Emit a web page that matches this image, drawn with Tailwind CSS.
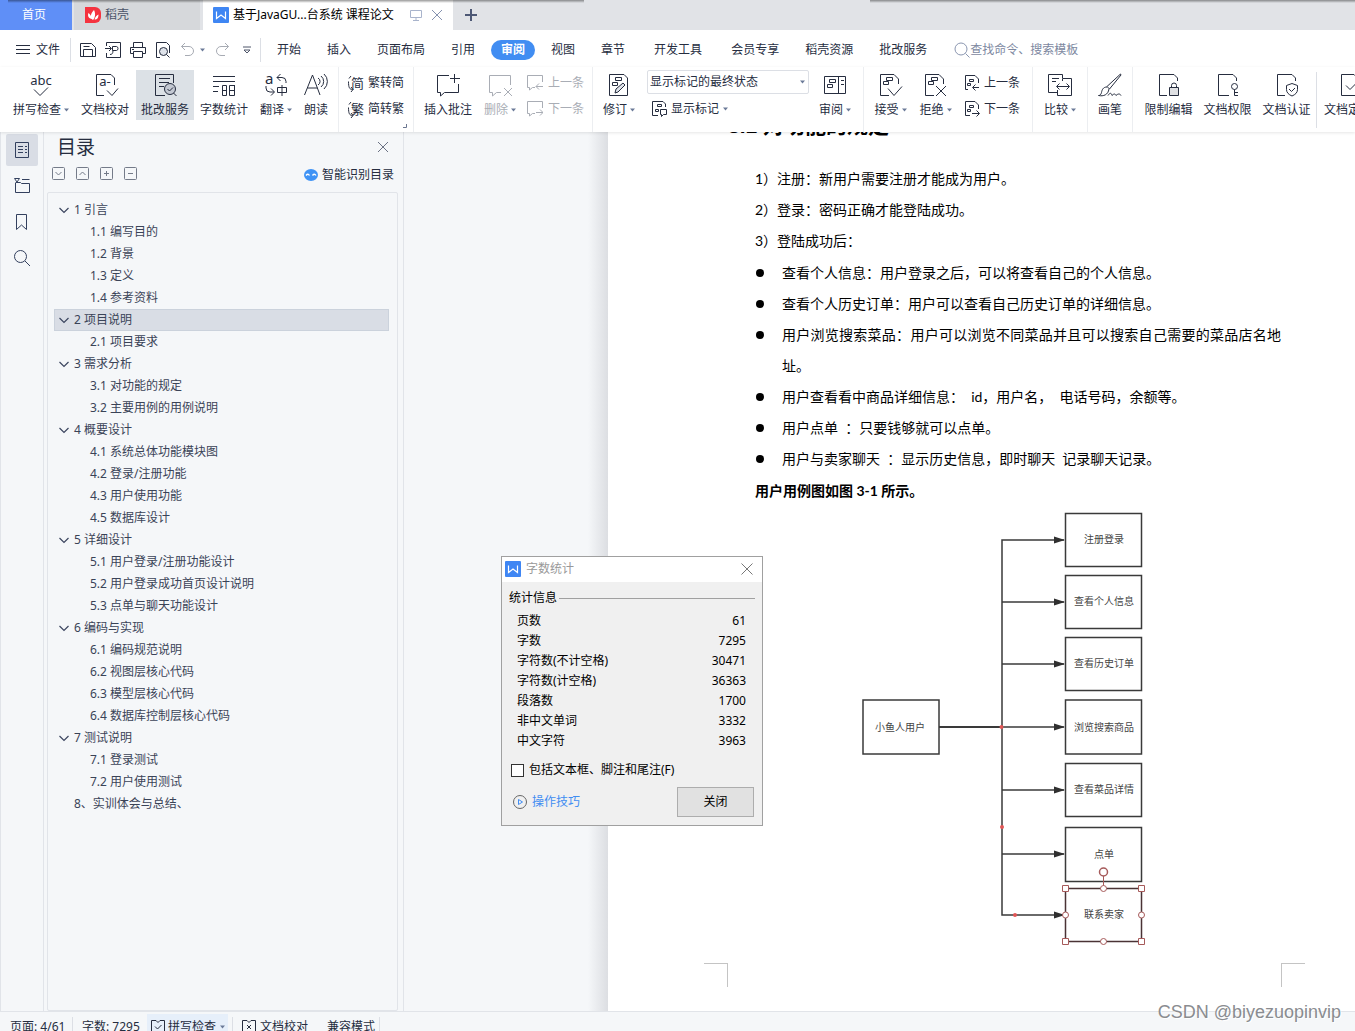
<!DOCTYPE html>
<html lang="zh-CN">
<head>
<meta charset="utf-8">
<title>基于JavaGUI的台系统 课程论文</title>
<script src="https://cdn.jsdelivr.net/npm/@tailwindcss/browser@4"></script>
</head>
<body class="flex h-screen flex-col overflow-hidden bg-[#f5f7f9] font-['Noto_Sans','Noto_Sans_CJK_SC',sans-serif] text-xs leading-4 text-[#262d3f]">
<svg class="hidden" aria-hidden="true">
  <symbol id="caret" viewBox="0 0 5 4"><path d="M0 .5h5L2.500 3.500z" fill="#6b7a98"/></symbol>
  <symbol id="doc" viewBox="0 0 24 24"><path d="M12 22.500H3.500V1.500H17L21.500 6V11" fill="none" stroke="currentColor"/></symbol>
  <symbol id="tags" viewBox="0 0 24 24"><path d="M9.500 5.500h6v3h-6zM6.500 9.500h5v3h-5z" fill="none" stroke="currentColor"/></symbol>
  <symbol id="wlogo" viewBox="0 0 16 16"><rect width="16" height="16" rx="1" fill="#3f86f3"/><path d="M3.500 4.500v7L8 8l4.500 3.500v-7" fill="none" stroke="#fff" stroke-width="1.200"/></symbol>
  <symbol id="chev" viewBox="0 0 10 10"><path d="M.5 3l4.500 4.500L9.500 3" fill="none" stroke="#3c4660" stroke-width="1.200"/></symbol>
  <symbol id="sprev" viewBox="0 0 16 16"><path d="M4 14.500H1.500V.5H11l3.500 3.500v4M5.500 4.500h4v2h-4zM3.500 8.500h3v2h-3zM15 12.500H9M11.500 9.500l-3 3 3 3" fill="none" stroke="currentColor"/></symbol>
  <symbol id="snext" viewBox="0 0 16 16"><path d="M6 14.500H1.500V.5H11l3.500 3.500v4M5.500 4.500h4v2h-4zM3.500 8.500h3v2h-3zM8 12.500h7M12.500 9.500l3 3-3 3" fill="none" stroke="currentColor"/></symbol>
</svg>

<header class="shrink-0">
  <div class="relative flex h-[30px] bg-[#e1e3e7]">
    <button class="w-[72px] bg-[#5f8ff7] pr-1 text-white">首页</button>
    <button class="ml-0.5 flex w-[126px] items-center gap-1 bg-[#d6d8db] pl-[11px] text-[#4a5368]">
      <svg class="size-4" viewBox="0 0 16 16"><path d="M0 0h10a6 6 0 0 1 6 6v4a6 6 0 0 1-6 6H0z" fill="#f5333f"/><path d="M8 13C4 11 6 6 9 3c2 4 1 8-1 10zM6.500 12C3 11 2.500 8 3.500 6c2 2 3 3 3 6zM9.500 12.500c1-3 2-4 4-5 0 3-1 5-4 5z" fill="#fff"/></svg>稻壳</button>
    <div class="ml-[3px] flex w-[250px] items-center bg-white pl-2.5 text-black">
      <svg class="size-4"><use href="#wlogo"/></svg>
      <span class="ml-1 w-[173px] whitespace-nowrap">基于JavaGU...台系统 课程论文</span>
      <svg class="mr-2 ml-1 h-3 w-[13px]" viewBox="0 0 13 12"><path d="M.5 1.500h11v7H.5zM6 8.500v3M3 11.500h6" fill="none" stroke="#a9b4cc"/></svg>
      <button aria-label="关闭标签"><svg class="size-3" viewBox="0 0 12 12"><path d="M1 1l10 10M11 1L1 11" stroke="#8592b0"/></svg></button>
    </div>
    <button class="ml-3" aria-label="新建标签"><svg class="size-3" viewBox="0 0 12 12"><path d="M6 0v12M0 6h12" stroke="#4d5875" stroke-width="2"/></svg></button>
    <div class="absolute inset-x-0 top-0 flex h-[3px]">
      <div class="ml-2 w-72 bg-linear-to-b from-black/40 to-transparent"></div>
      <div class="w-72 bg-linear-to-b from-black/40 to-transparent"></div>
      <div class="ml-[286px] flex-1 bg-linear-to-b from-black/40 to-transparent"></div>
    </div>
  </div>

  <nav class="flex h-[37px] items-center bg-white pt-0.5 whitespace-nowrap">
    <button class="ml-4 flex shrink-0 items-center gap-1.5">
      <svg class="h-3 w-3.5" viewBox="0 0 14 12"><path d="M0 1.500h14M0 5.500h14M0 9.500h14" stroke="#262d3f"/></svg>文件</button>
    <span class="ml-2.5 h-6 w-px shrink-0 bg-[#dcdfe5]"></span>
    <div class="ml-[9px] flex shrink-0 items-center gap-[9px]">
      <button aria-label="保存"><svg class="size-4" viewBox="0 0 16 16" fill="none" stroke="#262d3f"><path d="M.5 1.500h11l4 4v9H.5zM3.500 14V7.500h9V14M3.500 4.500h6"/></svg></button>
      <button aria-label="输出PDF"><svg class="size-4" viewBox="0 0 16 16" fill="none" stroke="#262d3f"><path d="M1.500 4V.5h14v15h-14V11M0 6.500h6M4 4l2.500 2.500L4 9M7.500 4.500h4c2 0 2 4 0 4h-4zM8 8.500c0 3-1 4-3 4"/></svg></button>
      <button aria-label="打印"><svg class="size-4" viewBox="0 0 16 16" fill="none" stroke="#262d3f"><path d="M3.500 5V.5h9V5M3.500 11.500h-3V5.500h15v6h-3M3.500 9.500h9v6h-9zM2 7.500h2"/></svg></button>
      <button aria-label="打印预览"><svg class="size-4" viewBox="0 0 16 16" fill="none" stroke="#262d3f"><path d="M5 15.500H1.500V.5h10l3 3V11"/><circle cx="8.500" cy="9.500" r="4" fill="#dfe3ea"/><path d="M11.500 12.500l3 3"/></svg></button>
      <button aria-label="撤销"><svg class="size-4" viewBox="0 0 16 16" fill="none" stroke="#a7abb3"><path d="M5 1L1.500 4.500 5 8M1.500 4.500H9a4.500 4.500 0 0 1 0 9H5"/></svg></button>
    </div>
    <svg class="ml-1 h-1 w-[5px]"><use href="#caret"/></svg>
    <button class="ml-2.5" aria-label="恢复"><svg class="size-4" viewBox="0 0 16 16" fill="none" stroke="#a7abb3"><path d="M10 1l3.500 3.500L10 8M13.500 4.500H6a4.500 4.500 0 0 0 0 9h4"/></svg></button>
    <button class="ml-3" aria-label="自定义"><svg class="size-2" viewBox="0 0 8 8"><path d="M0 1h8M1 4l3 3 3-3z" fill="none" stroke="#4d5568"/></svg></button>
    <span class="ml-[9px] h-6 w-px shrink-0 bg-[#dcdfe5]"></span>
    <div class="ml-4 flex items-center gap-[26px]">
      <button>开始</button><button>插入</button><button>页面布局</button><button>引用</button>
    </div>
    <button class="mx-4 h-5 w-11 shrink-0 rounded-full bg-[#418df2] font-bold text-white">审阅</button>
    <div class="flex items-center gap-[26px]"><button>视图</button><button>章节</button></div>
    <div class="ml-[29px] flex items-center gap-[29px]"><button>开发工具</button><button>会员专享</button></div>
    <div class="ml-[26px] flex items-center gap-[26px]"><button>稻壳资源</button><button>批改服务</button></div>
    <label class="ml-[27px] flex items-center">
      <svg class="size-4" viewBox="0 0 16 16" fill="none" stroke="#8a96b0"><circle cx="7" cy="7" r="6"/><path d="M11.500 11.500l4 4"/></svg>
      <input type="text" aria-label="搜索" placeholder="查找命令、搜索模板" class="w-40 outline-none placeholder:text-[#7d889f]">
    </label>
  </nav>

  <div class="relative z-10 flex h-[65px] bg-white whitespace-nowrap shadow-[0_1px_3px_#0000001a]">
    <div class="flex shrink-0 items-start border-r border-[#eceef1] py-[3px] pr-1 pl-2">
      <button class="flex h-[50px] w-[66px] flex-col items-center gap-[5px] pt-[3px]">
        <svg class="size-6 overflow-visible" viewBox="0 0 24 24" fill="none" stroke="currentColor"><text x="12" y="12" text-anchor="middle" font-size="13" fill="currentColor" stroke="none">abc</text><path d="M5 16.500l6 6 8-8"/></svg>
        <span class="flex items-center gap-[3px]">拼写检查<svg class="h-1 w-[5px]"><use href="#caret"/></svg></span></button>
      <button class="flex h-[50px] w-[62px] flex-col items-center gap-[5px] pt-[3px]">
        <svg class="size-6 overflow-visible" viewBox="0 0 24 24" fill="none" stroke="currentColor"><path d="M11 22.500H3.500V1.500H18L21.500 5V12"/><text x="12" y="13" text-anchor="middle" font-size="13" fill="currentColor" stroke="none">a-</text><path d="M14 17.500l5 5 6-7"/></svg>
        <span>文档校对</span></button>
      <button class="flex h-[50px] w-[58px] flex-col items-center gap-[5px] bg-[#dce1e6] pt-[3px]">
        <svg class="size-6" viewBox="0 0 24 24" fill="none" stroke="currentColor"><path d="M12 22.500H2.500V1.500h18V10M6 5.500h11M6 9.500h10M6 13.500h5"/><circle cx="17" cy="16" r="5.500" fill="#c3c8d2"/><path d="M14.500 16l2 2 3.500-3.500M20.500 20l3 3"/></svg>
        <span>批改服务</span></button>
      <button class="flex h-[50px] w-[60px] flex-col items-center gap-[5px] pt-[3px]">
        <svg class="size-6" viewBox="0 0 24 24" fill="none" stroke="currentColor"><path d="M1 3.500h22M1 8.500h22M1 13.500h6M1 18.500h5M10.500 12.500h4v10h-4zM10.500 17.500h4M23 12.500h-5.500v10h5v-10M17.500 17.500h5"/></svg>
        <span>字数统计</span></button>
      <button class="flex h-[50px] w-[44px] flex-col items-center gap-[5px] pt-[3px]">
        <svg class="size-6 overflow-visible" viewBox="0 0 24 24" fill="none" stroke="currentColor"><text x="1" y="11" font-size="15" fill="currentColor" stroke="none">a</text><path d="M16.500 1L13 4.500 16.500 8M13 4.500h5a4 4 0 0 1 4 4V10M2 13v2a4 4 0 0 0 4 4h4M7 15.500l3.500 3.500L7 22.500M13.500 14.500h9v5h-9zM18 12v11"/></svg>
        <span class="flex items-center gap-[3px]">翻译<svg class="h-1 w-[5px]"><use href="#caret"/></svg></span></button>
      <button class="flex h-[50px] w-9 flex-col items-center gap-[5px] pt-[3px]">
        <svg class="size-6" viewBox="0 0 24 24" fill="none" stroke="currentColor"><path d="M.5 22L8.500 2l7.500 20M3.500 15h10M14 5a4 4 0 0 1 0 7M17 3a7 7 0 0 1 0 11M20 1a10 10 0 0 1 0 15"/></svg>
        <span>朗读</span></button>
    </div>
    <div class="relative flex w-[75px] shrink-0 flex-col gap-2.5 border-r border-[#eceef1] pt-2 pl-[9px]">
      <button class="flex items-center gap-1"><svg class="size-4 overflow-visible" viewBox="0 0 16 16" fill="none" stroke="currentColor"><text x="3" y="13" font-size="13" fill="currentColor" stroke="none">简</text><path d="M3 1L1 3.500M.5 6.500c0 6 1 8 4 8M3 12l2 2.500L3 17"/></svg>繁转简</button>
      <button class="flex items-center gap-1"><svg class="size-4 overflow-visible" viewBox="0 0 16 16" fill="none" stroke="currentColor"><text x="3" y="13" font-size="13" fill="currentColor" stroke="none">繁</text><path d="M3 1L1 3.500M.5 6.500c0 6 1 8 4 8M3 12l2 2.500L3 17"/></svg>简转繁</button>
      <svg class="absolute right-1.5 bottom-1 size-1" viewBox="0 0 4 4"><path d="M0 3.500h3.500V0" fill="none" stroke="#6b7690"/></svg>
    </div>
    <div class="flex shrink-0 border-r border-[#eceef1] pt-[3px] pr-2">
      <button class="flex h-[50px] w-[68px] flex-col items-center gap-[5px] pt-[3px]">
        <svg class="size-6" viewBox="0 0 24 24" fill="none" stroke="currentColor"><path d="M13 2.500H1.500v17h3v3.500l4-3.500h14V11M14 5.500h10M18.500 1v9"/></svg>
        <span>插入批注</span></button>
      <button class="flex h-[50px] w-9 flex-col items-center gap-[5px] pt-[3px] text-[#a9adb5]">
        <svg class="size-6" viewBox="0 0 24 24" fill="none" stroke="currentColor"><path d="M22.500 12V2.500H1.500v17h3v3.500l4-3.500H13M16 15l8 8M24 15l-8 8"/></svg>
        <span class="flex items-center gap-[3px]">删除<svg class="h-1 w-[5px]"><use href="#caret"/></svg></span></button>
      <div class="ml-[9px] flex flex-col gap-2.5 pt-[5px] text-[#a9adb5]">
        <button class="flex items-center gap-[5px]"><svg class="size-4" viewBox="0 0 16 16" fill="none" stroke="currentColor"><path d="M15.500 7V.5H.5v12h2V15l3-2.500H8M16 11.500H9M12 8.500l-3 3 3 3"/></svg>上一条</button>
        <button class="flex items-center gap-[5px]"><svg class="size-4" viewBox="0 0 16 16" fill="none" stroke="currentColor"><path d="M15.500 7V.5H.5v12h2V15l3-2.500H8M9 11.500h7M13 8.500l3 3-3 3"/></svg>下一条</button>
      </div>
    </div>
    <div class="flex shrink-0 border-r border-[#eceef1] pt-[3px] pr-1.5">
      <button class="flex h-[50px] w-[52px] flex-col items-center gap-[5px] pt-[3px]">
        <svg class="size-6" viewBox="0 0 24 24" fill="none" stroke="currentColor"><path d="M2.500 1.500H17L20.500 5v17.500h-18zM8.500 4.500h6v3h-6zM5.500 9.500h5v3h-5z"/><path d="M8 20l1-4 7-6 2 2-7 7z" fill="#dfe3ea"/></svg>
        <span class="flex items-center gap-[3px]">修订<svg class="h-1 w-[5px]"><use href="#caret"/></svg></span></button>
      <div class="ml-0.5 flex w-[162px] flex-col gap-[7px]">
        <div class="relative">
          <select aria-label="显示状态" class="h-6 w-full appearance-none rounded-xs border border-[#dcdfe5] bg-white pl-0.5"><option>显示标记的最终状态</option></select>
          <svg class="absolute top-2.5 right-1 h-1 w-[5px]"><use href="#caret"/></svg>
        </div>
        <button class="ml-[5px] flex items-center gap-[3px]"><svg class="size-4" viewBox="0 0 16 16" fill="none" stroke="currentColor"><path d="M6 14.500H.5V.5H11L13.500 3v3M5.500 3.500h4v2h-4zM3.500 8.500h3v2h-3zM8.500 8.500h6v5h-3l-2 2v-2h-1z"/></svg>显示标记<svg class="ml-px h-1 w-[5px]"><use href="#caret"/></svg></button>
      </div>
      <button class="ml-1 flex h-[50px] w-[44px] flex-col items-center gap-[5px] pt-[3px]">
        <svg class="size-6" viewBox="0 0 24 24" fill="none" stroke="currentColor"><path d="M1.500 3.500h21v17h-21zM15.500 3.500v17M6.500 6.500h6v3h-6zM4.500 11.500h5v3h-5zM18 7.500h3M18 11.500h3"/></svg>
        <span class="flex items-center gap-[3px]">审阅<svg class="h-1 w-[5px]"><use href="#caret"/></svg></span></button>
    </div>
    <div class="flex shrink-0 border-r border-[#eceef1] pt-[3px] pr-3 pl-1">
      <button class="flex h-[50px] w-[45px] flex-col items-center gap-[5px] pt-[3px]">
        <svg class="size-6" viewBox="0 0 24 24" fill="none" stroke="currentColor"><use href="#doc" x="-2" width="24" height="24"/><use href="#tags" x="-2" y="-1" width="24" height="24"/><path d="M9 15.500l6 7 8-9"/></svg>
        <span class="flex items-center gap-[3px]">接受<svg class="h-1 w-[5px]"><use href="#caret"/></svg></span></button>
      <button class="flex h-[50px] w-[45px] flex-col items-center gap-[5px] pt-[3px]">
        <svg class="size-6" viewBox="0 0 24 24" fill="none" stroke="currentColor"><use href="#doc" x="-2" width="24" height="24"/><use href="#tags" x="-2" y="-1" width="24" height="24"/><path d="M12 13l10 10M22 13L12 23"/></svg>
        <span class="flex items-center gap-[3px]">拒绝<svg class="h-1 w-[5px]"><use href="#caret"/></svg></span></button>
      <div class="ml-1.5 flex flex-col gap-2.5 pt-[5px]">
        <button class="flex items-center gap-1"><svg class="size-4"><use href="#sprev"/></svg>上一条</button>
        <button class="flex items-center gap-1"><svg class="size-4"><use href="#snext"/></svg>下一条</button>
      </div>
    </div>
    <div class="shrink-0 border-r border-[#eceef1] pt-[3px]">
      <button class="flex h-[50px] w-[54px] flex-col items-center gap-[5px] pt-[3px]">
        <svg class="size-6" viewBox="0 0 24 24" fill="none" stroke="currentColor"><path d="M9 19.500H.5V1.500h14V5M4 5.500h7M4 8.500h4M14.500 5.500h9v17h-14V17M14.500 5.500V8M9 13.500h12M11.500 10.500l-3 3 3 3M18.500 10.500l3 3-3 3"/></svg>
        <span class="flex items-center gap-[3px]">比较<svg class="h-1 w-[5px]"><use href="#caret"/></svg></span></button>
    </div>
    <div class="shrink-0 border-r border-[#eceef1] pt-[3px]">
      <button class="flex h-[50px] w-[44px] flex-col items-center gap-[5px] pt-[3px]">
        <svg class="size-6" viewBox="0 0 24 24" fill="none" stroke="currentColor"><path d="M22.500 1L9 13.500l2.500 2.500L23 2zM9 14c-4 0-5 3-5.500 5.500C3 21.500 2 22.500.5 22.500c5 1 9.500-.5 10.500-6.500M10 22.500c2-3 3-3 4 0 2-2 3-2 4 0 2-2 4-2 5 0"/></svg>
        <span>画笔</span></button>
    </div>
    <div class="flex min-w-0 flex-1 overflow-hidden pt-[3px] pl-1.5">
      <button class="flex h-[50px] w-[59px] shrink-0 flex-col items-center gap-[5px] pt-[3px]">
        <svg class="size-6" viewBox="0 0 24 24" fill="none" stroke="currentColor"><path d="M10 22.500H2.500V1.500H17L20.500 5V8"/><path d="M12.500 14.500h9v8h-9z" fill="#dfe0e3"/><path d="M14.500 14.500v-2a2.500 2.500 0 0 1 5 0v2"/></svg>
        <span>限制编辑</span></button>
      <button class="flex h-[50px] w-[59px] shrink-0 flex-col items-center gap-[5px] pt-[3px]">
        <svg class="size-6" viewBox="0 0 24 24" fill="none" stroke="currentColor"><path d="M13 22.500H2.500V1.500H17L20.500 5V8"/><circle cx="18.500" cy="13.500" r="3"/><path d="M18.500 16.500v6H22M18.500 19.500H22"/></svg>
        <span>文档权限</span></button>
      <button class="flex h-[50px] w-[59px] shrink-0 flex-col items-center gap-[5px] pt-[3px]">
        <svg class="size-6" viewBox="0 0 24 24" fill="none" stroke="currentColor"><path d="M10 22.500H2.500V1.500H17L20.500 5V8M17 10.500l5.500 2v4c0 3-2 5-5.500 6.500-3.500-1.500-5.500-3.500-5.500-6.500v-4zM14 16l2.500 2.500L20 15"/></svg>
        <span>文档认证</span></button>
      <span class="mt-0.5 h-14 w-px shrink-0 bg-[#dcdfe5]"></span>
      <button class="flex h-[50px] w-[62px] shrink-0 flex-col items-center gap-[5px] pt-[3px]">
        <svg class="size-6" viewBox="0 0 24 24" fill="none" stroke="currentColor"><path d="M21.500 10V5L18 1.500H5.500v21h16V16M10 12.500l4 4 8-8"/></svg>
        <span>文档定稿</span></button>
    </div>
  </div>
</header>

<main class="relative flex min-h-0 flex-1">
  <aside class="flex w-11 shrink-0 flex-col items-start gap-1 border-r border-l border-[#e1e4e9] pt-0.5 pl-[5px]">
    <button class="flex size-8 items-center justify-center rounded-xs bg-[#d9dde5]" aria-label="目录"><svg class="size-4" viewBox="0 0 16 16" fill="none" stroke="#33405e"><path d="M1.500.5h13v15h-13zM4 4.500h5M11 4.500h2M4 7.500h5M11 7.500h2M4 10.500h5M11 10.500h2"/></svg></button>
    <button class="flex size-8 items-center justify-center" aria-label="章节"><svg class="size-4" viewBox="0 0 16 16" fill="none" stroke="#33405e"><path d="M.5.5h5L3 4zM8 1.500h7.500M1.500 5v9.500h14v-9h-8l-1-1h-5"/></svg></button>
    <button class="flex size-8 items-center justify-center" aria-label="书签"><svg class="size-4" viewBox="0 0 16 16" fill="none" stroke="#33405e"><path d="M2.500.5h10v15l-5-4.500-5 4.500z"/></svg></button>
    <button class="flex size-8 items-center justify-center" aria-label="查找"><svg class="size-4" viewBox="0 0 16 16" fill="none" stroke="#33405e"><circle cx="6.500" cy="6.500" r="6"/><path d="M11 11l5 5"/></svg></button>
  </aside>

  <section class="flex w-[360px] shrink-0 flex-col border-r border-[#e1e4e9] pr-[5px] pl-[3px]">
    <div class="flex h-[29px] items-center justify-between px-2.5">
      <h2 class="text-[19px] leading-6">目录</h2>
      <button aria-label="关闭目录"><svg class="size-2.5" viewBox="0 0 10 10"><path d="M0 0l10 10M10 0L0 10" stroke="#6b7284"/></svg></button>
    </div>
    <div class="flex h-[31px] items-start justify-between pt-1.5 pr-1 pl-[5px]">
      <div class="flex gap-[11px]">
        <button aria-label="展开"><svg class="size-[13px]" viewBox="0 0 13 13" fill="none" stroke="#747b89"><rect x=".5" y=".5" width="12" height="12" rx="1"/><path d="M3.500 5l3 3 3-3"/></svg></button>
        <button aria-label="收起"><svg class="size-[13px]" viewBox="0 0 13 13" fill="none" stroke="#747b89"><rect x=".5" y=".5" width="12" height="12" rx="1"/><path d="M3.500 8l3-3 3 3"/></svg></button>
        <button aria-label="增加级别"><svg class="size-[13px]" viewBox="0 0 13 13" fill="none" stroke="#747b89"><rect x=".5" y=".5" width="12" height="12" rx="1"/><path d="M4 6.500h5M6.500 4v5"/></svg></button>
        <button aria-label="减少级别"><svg class="size-[13px]" viewBox="0 0 13 13" fill="none" stroke="#747b89"><rect x=".5" y=".5" width="12" height="12" rx="1"/><path d="M4 6.500h5"/></svg></button>
      </div>
      <button class="flex items-center gap-1"><svg class="size-3.5" viewBox="0 0 14 14"><ellipse cx="7" cy="7" rx="7" ry="6" fill="#3f93f5"/><path d="M2 7.500q2-2.500 3.500 0M8.500 7.500q2-2.500 3.500 0" fill="none" stroke="#fff" stroke-width="1.300"/></svg>智能识别目录</button>
    </div>
    <ul class="min-h-0 flex-1 rounded-xs border border-[#e1e4e9] pt-1.5 pr-2 pl-1.5 leading-[22px] text-[#3a4357]">
      <li class="flex items-center gap-[5px] pl-[5px]"><svg class="size-2.5"><use href="#chev"/></svg>1 引言</li>
      <li class="pl-9">1.1 编写目的</li>
      <li class="pl-9">1.2 背景</li>
      <li class="pl-9">1.3 定义</li>
      <li class="pl-9">1.4 参考资料</li>
      <li class="flex items-center gap-[5px] bg-[#d9dde5] pl-[5px] ring-1 ring-[#cbd2dc] ring-inset"><svg class="size-2.5"><use href="#chev"/></svg>2 项目说明</li>
      <li class="pl-9">2.1 项目要求</li>
      <li class="flex items-center gap-[5px] pl-[5px]"><svg class="size-2.5"><use href="#chev"/></svg>3 需求分析</li>
      <li class="pl-9">3.1 对功能的规定</li>
      <li class="pl-9">3.2 主要用例的用例说明</li>
      <li class="flex items-center gap-[5px] pl-[5px]"><svg class="size-2.5"><use href="#chev"/></svg>4 概要设计</li>
      <li class="pl-9">4.1 系统总体功能模块图</li>
      <li class="pl-9">4.2 登录/注册功能</li>
      <li class="pl-9">4.3 用户使用功能</li>
      <li class="pl-9">4.5 数据库设计</li>
      <li class="flex items-center gap-[5px] pl-[5px]"><svg class="size-2.5"><use href="#chev"/></svg>5 详细设计</li>
      <li class="pl-9">5.1 用户登录/注册功能设计</li>
      <li class="pl-9">5.2 用户登录成功首页设计说明</li>
      <li class="pl-9">5.3 点单与聊天功能设计</li>
      <li class="flex items-center gap-[5px] pl-[5px]"><svg class="size-2.5"><use href="#chev"/></svg>6 编码与实现</li>
      <li class="pl-9">6.1 编码规范说明</li>
      <li class="pl-9">6.2 视图层核心代码</li>
      <li class="pl-9">6.3 模型层核心代码</li>
      <li class="pl-9">6.4 数据库控制层核心代码</li>
      <li class="flex items-center gap-[5px] pl-[5px]"><svg class="size-2.5"><use href="#chev"/></svg>7 测试说明</li>
      <li class="pl-9">7.1 登录测试</li>
      <li class="pl-9">7.2 用户使用测试</li>
      <li class="pl-5">8、实训体会与总结、</li>
    </ul>
  </section>

  <div class="flex w-[204px] shrink-0 justify-end"><div class="w-5 bg-linear-to-r from-[#f5f7f9] to-[#dcdee2]"></div></div>

  <article class="min-w-0 flex-1 overflow-hidden bg-white pl-24 font-['Lato','Noto_Sans_CJK_SC',sans-serif] text-sm text-black">
    <div class="w-[601px] px-6">
      <h1 class="-mt-5 mb-[23px] font-['Liberation_Sans','Noto_Sans_CJK_SC',sans-serif] text-[21px] leading-7 font-bold">3.1 对功能的规定</h1>
      <div class="pl-[27px] leading-[31px]">
        <p>1）注册：新用户需要注册才能成为用户。</p>
        <p>2）登录：密码正确才能登陆成功。</p>
        <p>3）登陆成功后：</p>
        <ul class="w-[526px] py-px">
          <li class="flex items-start"><span class="mt-3 ml-px size-2 shrink-0 rounded-full bg-black"></span><span class="ml-[18px]">查看个人信息：用户登录之后，可以将查看自己的个人信息。</span></li>
          <li class="flex items-start"><span class="mt-3 ml-px size-2 shrink-0 rounded-full bg-black"></span><span class="ml-[18px]">查看个人历史订单：用户可以查看自己历史订单的详细信息。</span></li>
          <li class="flex items-start"><span class="mt-3 ml-px size-2 shrink-0 rounded-full bg-black"></span><span class="ml-[18px] text-justify">用户浏览搜索菜品：用户可以浏览不同菜品并且可以搜索自己需要的菜品店名地址。</span></li>
          <li class="flex items-start"><span class="mt-3 ml-px size-2 shrink-0 rounded-full bg-black"></span><span class="ml-[18px] whitespace-pre">用户查看看中商品详细信息：  id，用户名，  电话号码，余额等。</span></li>
          <li class="flex items-start"><span class="mt-3 ml-px size-2 shrink-0 rounded-full bg-black"></span><span class="ml-[18px] whitespace-pre">用户点单  ：只要钱够就可以点单。</span></li>
          <li class="flex items-start"><span class="mt-3 ml-px size-2 shrink-0 rounded-full bg-black"></span><span class="ml-[18px] whitespace-pre">用户与卖家聊天  ：显示历史信息，即时聊天  记录聊天记录。</span></li>
        </ul>
        <p class="font-bold">用户用例图如图 3-1 所示。</p>
        <svg class="ml-[100px] h-[457px] w-[300px]" viewBox="855 506 300 457" font-size="10" text-anchor="middle" font-family="Noto Sans CJK SC, sans-serif">
          <defs><marker id="ah" viewBox="0 0 11 8" refX="10" refY="4" markerWidth="11" markerHeight="8" markerUnits="userSpaceOnUse" orient="auto"><path d="M0 .5l11 3.500-11 3.500z" fill="#303030"/></marker></defs>
          <g fill="none" stroke="#3a3a3a" stroke-width="1.500">
            <path d="M939 727h63" stroke-width="2"/>
            <path d="M1002 727V540h62" marker-end="url(#ah)"/>
            <path d="M1002 602h62" marker-end="url(#ah)"/>
            <path d="M1002 664h62" marker-end="url(#ah)"/>
            <path d="M1002 727h62" marker-end="url(#ah)"/>
            <path d="M1002 790h62" marker-end="url(#ah)"/>
            <path d="M1002 854h62" marker-end="url(#ah)"/>
            <path d="M1002 727v188h62" marker-end="url(#ah)"/>
            <rect x="863" y="700" width="76" height="54"/>
            <rect x="1065.500" y="513.500" width="76" height="53"/>
            <rect x="1065.500" y="575.500" width="76" height="53"/>
            <rect x="1065.500" y="637.500" width="76" height="53"/>
            <rect x="1065.500" y="700" width="76" height="54"/>
            <rect x="1065.500" y="763.500" width="76" height="53"/>
            <rect x="1065.500" y="827.500" width="76" height="54"/>
            <rect x="1065.500" y="888.500" width="76" height="53" stroke="#4a3335"/>
          </g>
          <g fill="#444">
            <text x="900" y="731">小鱼人用户</text><text x="1104" y="543">注册登录</text><text x="1104" y="605">查看个人信息</text><text x="1104" y="667">查看历史订单</text><text x="1104" y="731">浏览搜索商品</text><text x="1104" y="793">查看菜品详情</text><text x="1104" y="858">点单</text><text x="1104" y="918">联系卖家</text>
          </g>
          <g fill="#e25555"><circle cx="1001.500" cy="727" r="2"/><circle cx="1002" cy="827" r="2"/><circle cx="1015" cy="915" r="2"/></g>
          <g fill="#fff" stroke="#a65a5a">
            <path d="M1103.500 876v12"/><circle cx="1103.500" cy="872" r="4" stroke-width="1.500"/>
            <circle cx="1103.500" cy="888.500" r="3"/><circle cx="1103.500" cy="941.500" r="3"/><circle cx="1065.500" cy="915" r="3"/><circle cx="1141.500" cy="915" r="3"/>
            <path d="M1062.500 885.500h6v6h-6zM1138.500 885.500h6v6h-6zM1062.500 938.500h6v6h-6zM1138.500 938.500h6v6h-6z"/>
          </g>
        </svg>
      </div>
    </div>
    <div class="flex w-[601px] justify-between">
      <span class="size-6 border-t border-r border-[#c4c4c4]"></span>
      <span class="size-6 border-t border-l border-[#c4c4c4]"></span>
    </div>
  </article>

  <div role="dialog" aria-label="字数统计" class="absolute top-[424px] left-[501px] w-[262px] border border-[#a0a0a0] bg-[#f0f0f0] text-black">
    <div class="flex h-[25px] items-center bg-white pr-[9px] pb-px pl-[3px] text-[#999]">
      <svg class="size-4"><use href="#wlogo"/></svg>
      <span class="ml-[5px] flex-1">字数统计</span>
      <button aria-label="关闭窗口"><svg class="size-3" viewBox="0 0 12 12"><path d="M.5.5l11 11M11.500.5l-11 11" stroke="#777"/></svg></button>
    </div>
    <div class="px-[7px] py-2">
      <div class="flex items-center gap-0.5"><h3>统计信息</h3><span class="h-px flex-1 bg-[#a0a0a0]"></span></div>
      <table class="mt-[5px] ml-2 w-[229px] leading-5">
        <tr><td class="p-0">页数</td><td class="p-0 text-right">61</td></tr>
        <tr><td class="p-0">字数</td><td class="p-0 text-right">7295</td></tr>
        <tr><td class="p-0">字符数(不计空格)</td><td class="p-0 text-right">30471</td></tr>
        <tr><td class="p-0">字符数(计空格)</td><td class="p-0 text-right">36363</td></tr>
        <tr><td class="p-0">段落数</td><td class="p-0 text-right">1700</td></tr>
        <tr><td class="p-0">非中文单词</td><td class="p-0 text-right">3332</td></tr>
        <tr><td class="p-0">中文字符</td><td class="p-0 text-right">3963</td></tr>
      </table>
      <label class="mt-[11px] ml-0.5 flex items-center gap-[5px]"><input type="checkbox" class="size-[13px] appearance-none border border-[#333] bg-white">包括文本框、脚注和尾注(F)</label>
      <div class="mt-[9px] flex items-center justify-between pr-px pl-1">
        <a href="#" class="flex items-center gap-[5px] text-[#418df2]"><svg class="size-3.5" viewBox="0 0 14 14" fill="none"><circle cx="7" cy="7" r="6.500" stroke="#666"/><path d="M5.500 4.500v5L9.500 7z" stroke="#418df2"/></svg>操作技巧</a>
        <button class="h-[30px] w-[77px] border border-[#adadad] bg-[#e1e1e1]">关闭</button>
      </div>
    </div>
  </div>
</main>

<footer class="relative h-5 shrink-0 border-t border-[#e1e4e9] whitespace-nowrap">
  <div class="h-[19px] overflow-hidden">
    <div class="flex h-[30px] items-center pl-2.5">
      <span class="w-[62px]">页面: 4/61</span><span class="h-5 w-px bg-[#dcdfe5]"></span>
      <span class="ml-[9px] w-[65px]">字数: 7295</span>
      <button class="flex h-[26px] items-center gap-0.5 bg-[#e6effa] px-[3px]"><svg class="size-4" viewBox="0 0 16 16" fill="none" stroke="#262d3f"><path d="M6 1.500H1.500v13h13v-13H10L8 3.500l-2-2M5 7.500l2.500 2.500 4-4"/></svg>拼写检查<svg class="ml-0.5 h-1 w-[5px]"><use href="#caret"/></svg></button>
      <span class="ml-1 h-5 w-px bg-[#dcdfe5]"></span>
      <button class="ml-2 flex items-center gap-[3px]"><svg class="size-4" viewBox="0 0 16 16" fill="none" stroke="#262d3f"><path d="M6 1.500H1.500v13h13v-13H10L8 3.500l-2-2M6 6l4 4M10 6l-4 4"/></svg>文档校对</button>
      <span class="ml-[19px]">兼容模式</span><span class="ml-1 h-5 w-px bg-[#dcdfe5]"></span>
    </div>
  </div>
  <span class="absolute right-3.5 bottom-[7px] font-['Liberation_Sans',sans-serif] text-lg leading-6 text-[#8a8c90] [text-shadow:1px_1px_0_#fff]">CSDN @biyezuopinvip</span>
</footer>
</body>
</html>
